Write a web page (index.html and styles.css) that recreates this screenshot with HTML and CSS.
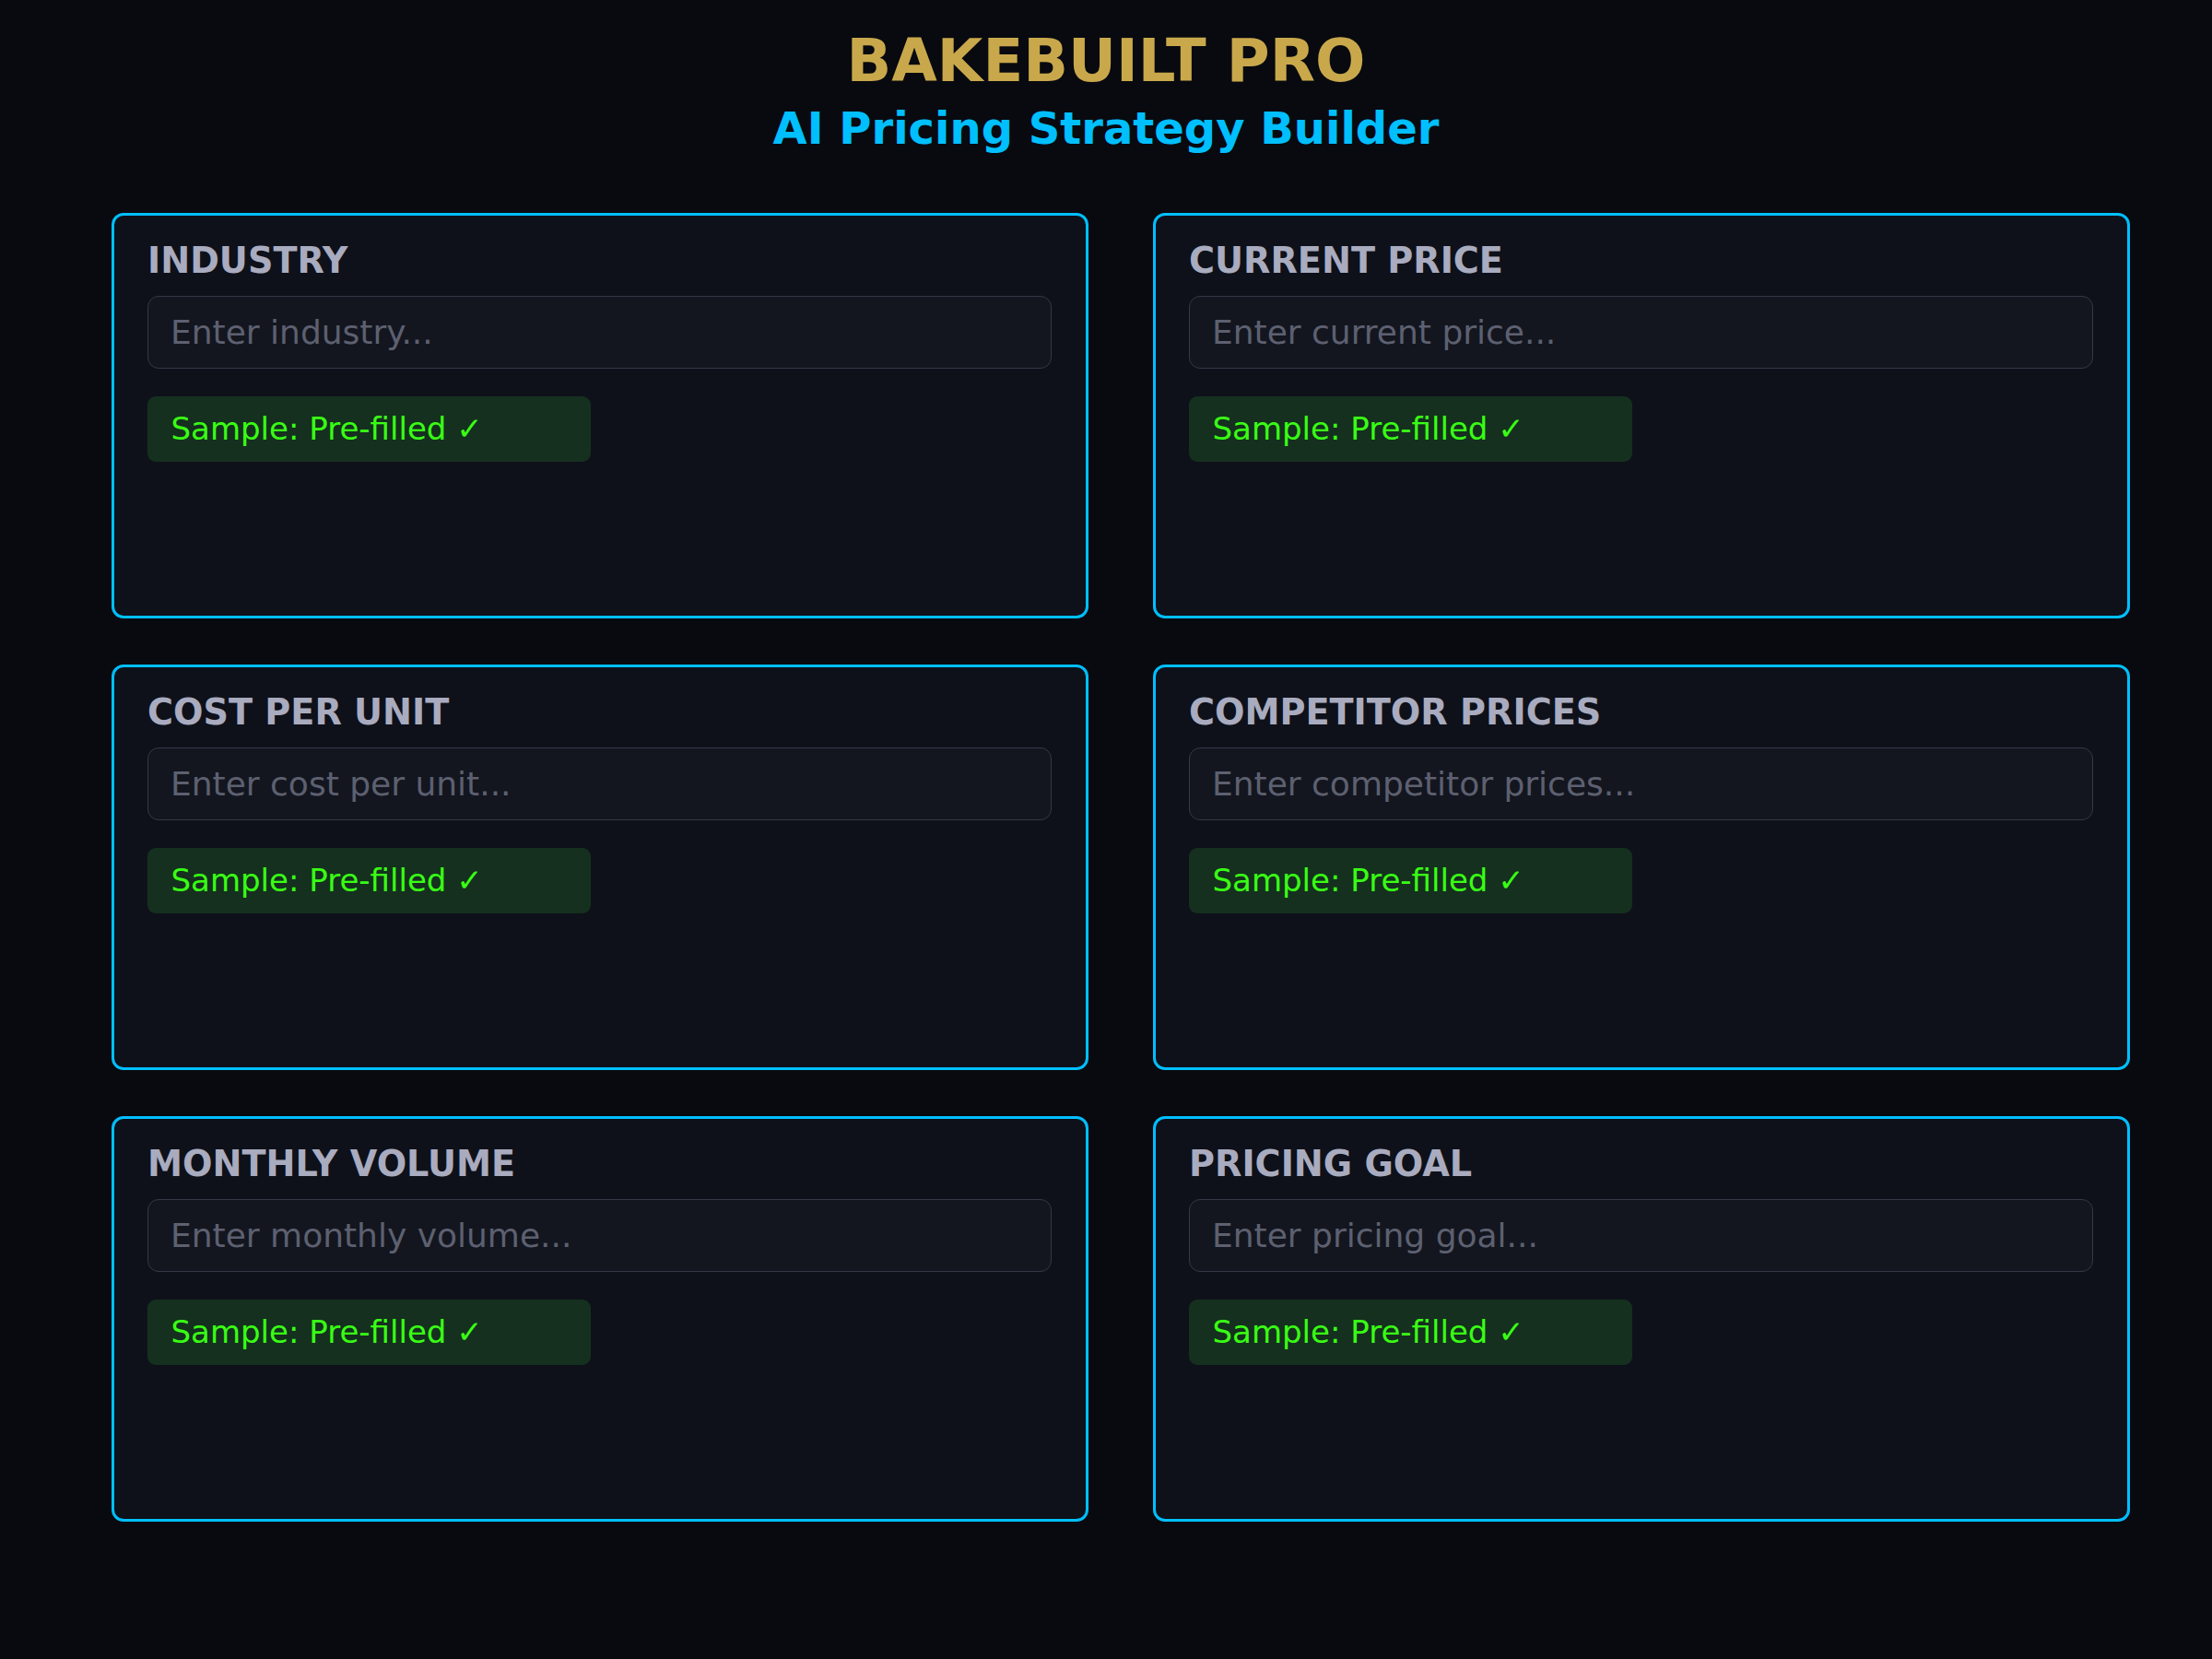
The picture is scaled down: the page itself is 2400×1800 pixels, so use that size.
FILE: index.html
```html
<!DOCTYPE html>
<html lang="en">
<head>
    <meta charset="UTF-8">
    <meta name="viewport" content="width=device-width, initial-scale=1.0">
    <title>BakeBuilt Pro - AI Pricing Strategy Builder</title>
    <link rel="stylesheet" href="styles.css">
</head>
<body>
    <header class="header">
        <h1 class="brand">BAKEBUILT PRO</h1>
        <h2 class="subtitle">AI Pricing Strategy Builder</h2>
    </header>

    <main class="fields">
        <section class="field-card">
            <label class="field-label" for="industry">INDUSTRY</label>
            <input type="text" class="field-input" id="industry" placeholder="Enter industry...">
            <div class="sample-badge">Sample: Pre-filled ✓</div>
        </section>

        <section class="field-card">
            <label class="field-label" for="current-price">CURRENT PRICE</label>
            <input type="text" class="field-input" id="current-price" placeholder="Enter current price...">
            <div class="sample-badge">Sample: Pre-filled ✓</div>
        </section>

        <section class="field-card">
            <label class="field-label" for="cost-per-unit">COST PER UNIT</label>
            <input type="text" class="field-input" id="cost-per-unit" placeholder="Enter cost per unit...">
            <div class="sample-badge">Sample: Pre-filled ✓</div>
        </section>

        <section class="field-card">
            <label class="field-label" for="competitor-prices">COMPETITOR PRICES</label>
            <input type="text" class="field-input" id="competitor-prices" placeholder="Enter competitor prices...">
            <div class="sample-badge">Sample: Pre-filled ✓</div>
        </section>

        <section class="field-card">
            <label class="field-label" for="monthly-volume">MONTHLY VOLUME</label>
            <input type="text" class="field-input" id="monthly-volume" placeholder="Enter monthly volume...">
            <div class="sample-badge">Sample: Pre-filled ✓</div>
        </section>

        <section class="field-card">
            <label class="field-label" for="pricing-goal">PRICING GOAL</label>
            <input type="text" class="field-input" id="pricing-goal" placeholder="Enter pricing goal...">
            <div class="sample-badge">Sample: Pre-filled ✓</div>
        </section>
    </main>
</body>
</html>
```

FILE: styles.css
```css
:root {
    --bg-color: #080a0f;
    --card-bg: #0e111a;
    --card-border: #00bfff;
    --input-bg: #13161f;
    --input-border: #353847;
    --gold: #c9a84c;
    --sky: #00bfff;
    --label-color: #a9abbf;
    --placeholder: #5d6070;
    --badge-bg: #15301f;
    --badge-text: #39ff14;
}

* {
    box-sizing: border-box;
}

body {
    background-color: var(--bg-color);
    margin: 0;
    min-height: 100vh;
    font-family: 'DejaVu Sans', Verdana, sans-serif;
}

.header {
    padding-top: 30px;
    text-align: center;
}

.brand {
    margin: 0;
    font-size: 64px;
    line-height: 73px;
    font-weight: bold;
    color: var(--gold);
}

.subtitle {
    margin: 8px 0 0;
    font-size: 48px;
    line-height: 56px;
    font-weight: bold;
    color: var(--sky);
}

.fields {
    display: grid;
    grid-template-columns: repeat(2, 1060px);
    column-gap: 70px;
    row-gap: 50px;
    margin-top: 64px;
    padding-left: 121px;
}

.field-card {
    display: flex;
    flex-direction: column;
    align-items: flex-start;
    height: 440px;
    padding: 26.5px 37px 0 36px;
    background-color: var(--card-bg);
    border: 3px solid var(--card-border);
    border-radius: 13px;
}

.field-label {
    font-size: 38.2px;
    line-height: 44px;
    font-weight: bold;
    color: var(--label-color);
}

.field-input {
    width: 100%;
    height: 79px;
    margin-top: 16.5px;
    padding: 0 24px;
    background-color: var(--input-bg);
    border: 1.5px solid var(--input-border);
    border-radius: 12px;
    font-family: 'DejaVu Sans', Verdana, sans-serif;
    font-size: 36px;
    color: var(--label-color);
    outline: none;
}

.field-input::placeholder {
    color: var(--placeholder);
}

.sample-badge {
    width: 481px;
    margin-top: 30px;
    padding: 15.5px 25.5px;
    background-color: var(--badge-bg);
    border-radius: 9px;
    font-size: 34px;
    line-height: 39.5px;
    color: var(--badge-text);
}
```
